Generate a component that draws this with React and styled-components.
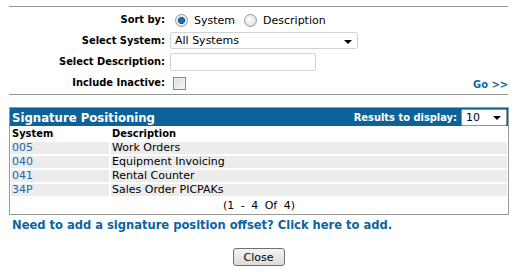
import React from "react";
import styled, { createGlobalStyle } from "styled-components";

const Global = createGlobalStyle`
  html, body { margin: 0; padding: 0; background: #fff; }
  body { font-family: "DejaVu Sans", Verdana, sans-serif; font-size: 11px; color: #000; }
`;

const boldFont = `"DejaVu Sans Condensed", "DejaVu Sans", Verdana, sans-serif`;

const Page = styled.div`
  width: 517px;
  height: 272px;
  padding: 6px 9px 0 9px;
  box-sizing: border-box;
`;

const Filters = styled.div`
  border-top: 1px solid #999;
  border-bottom: 1px solid #999;
  display: grid;
  grid-template-columns: 156px 1fr auto;
  column-gap: 5px;
  grid-auto-rows: 21px;
  align-items: center;
  padding: 2px 0 1px 0;
`;

const Label = styled.div`
  text-align: right;
  font-family: ${boldFont};
  font-weight: bold;
  white-space: nowrap;
`;

const Field = styled.div`
  display: flex;
  align-items: center;
  grid-column: ${(p) => (p.$wide ? "2 / span 2" : "2")};
`;

const RadioGroup = styled.label`
  display: flex;
  align-items: center;
  margin-right: 4px;
  font-size: 11px;
  padding-top: 1px;
`;

const Radio = styled.span`
  width: 11px;
  height: 11px;
  border-radius: 50%;
  border: 1px solid #8f9aa3;
  background: ${(p) =>
    p.$checked
      ? "radial-gradient(circle, #1a6fb3 0 2.5px, #0b4f86 3.2px, #dfe6ec 3.8px, #f4f6f8 100%)"
      : "radial-gradient(circle at 40% 40%, #ffffff 0, #e1e4e7 70%, #cfd3d6 100%)"};
  margin: 0 6px 0 5px;
  flex: none;
`;

const SelectBox = styled.div`
  position: relative;
  box-sizing: border-box;
  width: ${(p) => p.$w}px;
  height: ${(p) => p.$h}px;
  border: 1px solid ${(p) => p.$border || "#cdd3d8"};
  border-radius: 2px;
  background: #fff;
  display: flex;
  align-items: center;
  padding-left: 4px;
  font-family: "DejaVu Sans", Verdana, sans-serif;
  font-weight: normal;
  font-size: 11px;
  color: #000;
`;

const Arrow = styled.span`
  position: absolute;
  right: 5px;
  top: 50%;
  margin-top: -1px;
  width: 0;
  height: 0;
  border-left: 4px solid transparent;
  border-right: 4px solid transparent;
  border-top: 4px solid #000;
`;

const TextInput = styled.div`
  box-sizing: border-box;
  width: 146px;
  height: 18px;
  border: 1px solid #cdd3d8;
  border-radius: 2px;
  background: #fff;
`;

const Checkbox = styled.span`
  box-sizing: border-box;
  width: 13px;
  height: 13px;
  border: 1px solid #8a8a8a;
  background: linear-gradient(135deg, #dcdfe3 0%, #f4f5f6 100%);
  box-shadow: inset 0 0 0 1px #eef0f2;
  margin-left: 3px;
  margin-top: 2px;
`;

const GoLink = styled.a`
  color: #0b6aa5;
  font-family: ${boldFont};
  font-weight: bold;
  text-decoration: none;
  align-self: end;
  padding-bottom: 2px;
  white-space: nowrap;
`;

const Panel = styled.div`
  margin-top: 12px;
  border: 1px solid #9a9a9a;
  width: 500px;
  box-sizing: border-box;
`;

const PanelHeader = styled.div`
  background: #0d6399;
  height: 18px;
  display: flex;
  align-items: center;
  justify-content: space-between;
  padding: 0 1px 0 2px;
  color: #fff;
`;

const PanelTitle = styled.div`
  font-family: ${boldFont};
  font-size: 13px;
  font-weight: bold;
`;

const ResultsBox = styled.div`
  display: flex;
  align-items: center;
  gap: 4px;
  font-family: ${boldFont};
  font-weight: bold;
`;

const Table = styled.div`
  display: grid;
  grid-template-columns: 98px 1fr;
  column-gap: 2px;
  row-gap: 1px;
  padding: 1px 1px 0 1px;
`;

const HeadCell = styled.div`
  font-family: ${boldFont};
  font-weight: bold;
  height: 13px;
  line-height: 13px;
  padding-left: 1px;
  margin-bottom: 1px;
`;

const Cell = styled.div`
  background: #ececec;
  height: 12px;
  line-height: 12px;
  padding-left: 1px;
  margin-bottom: 1px;
  color: ${(p) => (p.$link ? "#2466a6" : "#000")};
`;

const Pager = styled.div`
  text-align: center;
  padding: 2px 0 2px 0;
  word-spacing: 3px;
`;

const AddLink = styled.a`
  display: block;
  color: #0b64a0;
  font-family: ${boldFont};
  font-weight: bold;
  font-size: 12.8px;
  text-decoration: none;
  margin: 2px 0 0 3px;
`;

const ButtonRow = styled.div`
  display: flex;
  justify-content: center;
  margin-top: 16px;
`;

const Button = styled.button`
  width: 52px;
  height: 18px;
  border: 1px solid #707070;
  border-radius: 3px;
  background: linear-gradient(#f4f4f4, #dcdcdc);
  font-family: inherit;
  font-size: 11px;
  padding: 0;
  color: #000;
`;

const rows = [
  ["005", "Work Orders"],
  ["040", "Equipment Invoicing"],
  ["041", "Rental Counter"],
  ["34P", "Sales Order PICPAKs"],
];

export default function App() {
  return (
    <>
      <Global />
      <Page>
        <Filters>
          <Label>Sort by:</Label>
          <Field $wide>
            <RadioGroup>
              <Radio $checked />
              System
            </RadioGroup>
            <RadioGroup>
              <Radio />
              Description
            </RadioGroup>
          </Field>
          <Label>Select System:</Label>
          <Field $wide>
            <SelectBox $w={188} $h={17}>
              All Systems
              <Arrow />
            </SelectBox>
          </Field>
          <Label>Select Description:</Label>
          <Field $wide>
            <TextInput />
          </Field>
          <Label>Include Inactive:</Label>
          <Field>
            <Checkbox />
          </Field>
          <GoLink>Go &gt;&gt;</GoLink>
        </Filters>

        <Panel>
          <PanelHeader>
            <PanelTitle>Signature Positioning</PanelTitle>
            <ResultsBox>
              Results to display:
              <SelectBox $w={46} $h={17} $border="#7a9ab5">
                10
                <Arrow />
              </SelectBox>
            </ResultsBox>
          </PanelHeader>
          <Table>
            <HeadCell>System</HeadCell>
            <HeadCell>Description</HeadCell>
            {rows.map(([s, d]) => (
              <React.Fragment key={s}>
                <Cell $link>{s}</Cell>
                <Cell>{d}</Cell>
              </React.Fragment>
            ))}
          </Table>
          <Pager>(1 - 4 Of 4)</Pager>
        </Panel>

        <AddLink>Need to add a signature position offset? Click here to add.</AddLink>

        <ButtonRow>
          <Button>Close</Button>
        </ButtonRow>
      </Page>
    </>
  );
}
